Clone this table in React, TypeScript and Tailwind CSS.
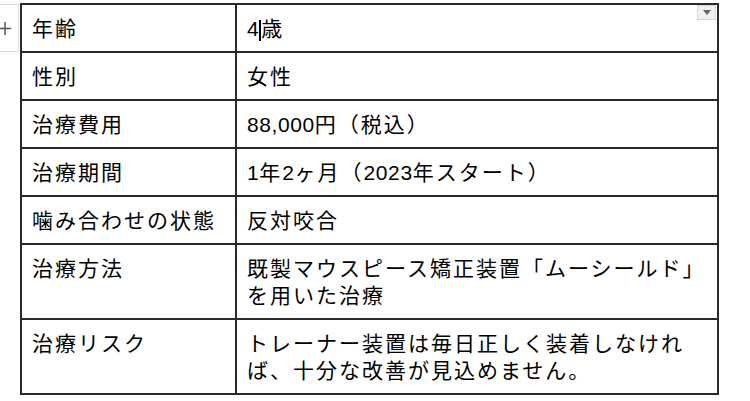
import React from "react";

const rows: { label: string; value: string }[] = [
  { label: "年齢", value: "4歳" },
  { label: "性別", value: "女性" },
  { label: "治療費用", value: "88,000円（税込）" },
  { label: "治療期間", value: "1年2ヶ月（2023年スタート）" },
  { label: "噛み合わせの状態", value: "反対咬合" },
  { label: "治療方法", value: "既製マウスピース矯正装置「ムーシールド」を用いた治療" },
  { label: "治療リスク", value: "トレーナー装置は毎日正しく装着しなければ、十分な改善が見込めません。" },
];

// latin runs keep near-normal spacing, japanese runs get a bit wider
const Txt = ({ s }: { s: string }) => (
  <>
    {s.split(/([0-9,]+)/).map((part, i) =>
      /^[0-9,]+$/.test(part) ? (
        <span key={i} className="tracking-[0.6px]">
          {part}
        </span>
      ) : (
        <span key={i}>{part}</span>
      )
    )}
  </>
);

export default function App() {
  return (
    <div
      className="w-[750px] h-[401px] bg-white flex text-black text-[21px] leading-[27px] tracking-[2px]"
      style={{ fontFamily: '"Liberation Sans", "Noto Sans CJK JP", sans-serif' }}
    >
      {/* row handle */}
      <div className="w-[20px] pt-[4px]">
        <div className="w-[19px] h-[48px] border-y border-r border-[#dcdcdc] flex items-center">
          <svg width="12" height="13" viewBox="0 0 12 13" className="-ml-[1px]">
            <path d="M0 6.5h12M6 0v13" stroke="#555" strokeWidth="1.5" />
          </svg>
        </div>
      </div>

      <div className="mt-[3px] w-[699px] self-start border-2 border-[#2a2a2a]">
        {rows.map((r, i) => (
          <div key={r.label} className={i > 0 ? "flex border-t-2 border-[#2a2a2a]" : "flex"}>
            <div className="w-[215px] shrink-0 border-r-2 border-[#2a2a2a] px-[10px] pt-[10px] pb-[9px]">
              {r.label}
            </div>
            <div className="relative flex-1 pl-[10px] pr-[5px] pt-[10px] pb-[9px]">
              {i === 0 ? (
                <>
                  <span className="tracking-[0.6px]">4</span>
                  <span className="inline-block w-[2px] h-[21px] bg-black align-[-5px]" />
                  歳
                  <div className="absolute top-0 right-[1px] w-[19px] h-[15px] bg-[#f0f0f0] border border-[#d6d6d6] flex items-center justify-center">
                    <svg width="8" height="5" viewBox="0 0 8 5">
                      <path d="M0 0h8L4 5z" fill="#666" />
                    </svg>
                  </div>
                </>
              ) : (
                <Txt s={r.value} />
              )}
            </div>
          </div>
        ))}
      </div>
    </div>
  );
}
